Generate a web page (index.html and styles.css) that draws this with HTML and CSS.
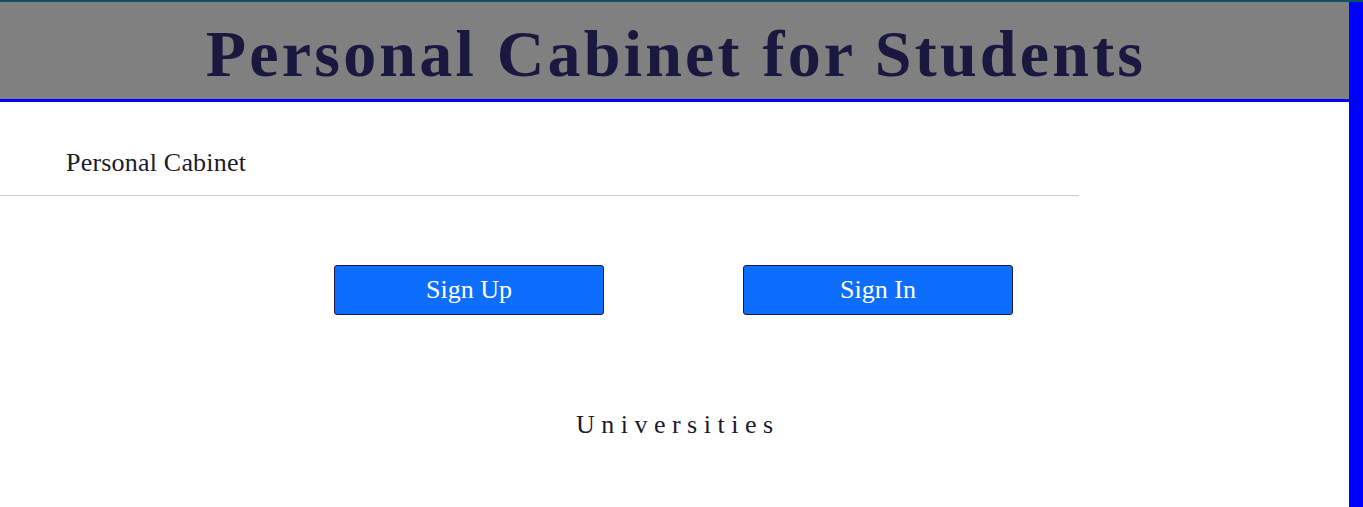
FILE: index.html
```html
<!DOCTYPE html>
<html lang="en">
<head>
<meta charset="utf-8">
<title>Personal Cabinet for Students</title>
<link rel="stylesheet" href="styles.css">
</head>
<body>
<div class="frame">
  <div class="page">
    <header class="banner">
      <h1 class="banner-title">Personal Cabinet for Students</h1>
    </header>
    <nav class="nav">
      <span class="nav-brand">Personal Cabinet</span>
    </nav>
    <div class="actions">
      <button class="btn">Sign Up</button>
      <button class="btn">Sign In</button>
    </div>
    <h2 class="section-title">Universities</h2>
  </div>
  <div class="side-bar"></div>
</div>
</body>
</html>
```

FILE: styles.css
```css
html, body {
  margin: 0;
  padding: 0;
  height: 100%;
  overflow: hidden;
  background: #ffffff;
}

.frame {
  display: flex;
  min-height: 100%;
  border-top: 2px solid #0b5563;
  box-sizing: border-box;
  font-family: "Liberation Serif", serif;
}

.page {
  flex: 1;
  display: flex;
  flex-direction: column;
}

.side-bar {
  width: 14px;
  background: #0000ff;
}

.banner {
  background: #808080;
  height: 100px;
  box-sizing: border-box;
  padding-top: 19px;
  padding-left: 3px;
  border-bottom: 3px solid #0000ff;
  text-align: center;
}

.banner-title {
  margin: 0;
  font-size: 66px;
  line-height: 66px;
  font-weight: bold;
  color: #1b1840;
  letter-spacing: 3.2px;
}

.nav {
  width: 1079px;
  height: 94px;
  box-sizing: border-box;
  border-bottom: 1px solid #cccccc;
  padding-top: 46px;
  padding-left: 66px;
}

.nav-brand {
  font-size: 26px;
  letter-spacing: 0.2px;
  color: #1a1a2e;
}

.actions {
  display: flex;
  justify-content: center;
  gap: 139px;
  margin-top: 69px;
  padding-right: 2px;
}

.btn {
  width: 270px;
  height: 50px;
  background: #0d6efd;
  color: #ffffff;
  border: 1px solid #1a1a40;
  border-radius: 3px;
  font-family: "Liberation Serif", serif;
  font-size: 26px;
  padding: 0;
}

.section-title {
  margin: 95px 0 0;
  padding-left: 6.5px;
  text-align: center;
  font-size: 26px;
  font-weight: normal;
  letter-spacing: 6.5px;
  color: #1a1a2e;
}
```
